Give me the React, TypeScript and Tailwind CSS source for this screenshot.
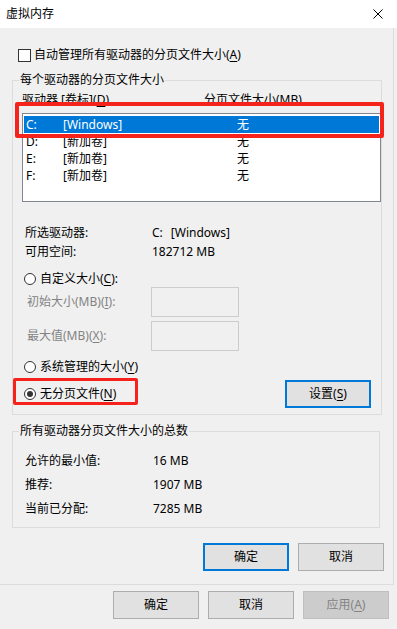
import type { ReactNode } from "react";

type Drive = { letter: string; label: string; size: string; selected?: boolean };

const DRIVES: Drive[] = [
  { letter: "C:", label: "[Windows]", size: "无", selected: true },
  { letter: "D:", label: "[新加卷]", size: "无" },
  { letter: "E:", label: "[新加卷]", size: "无" },
  { letter: "F:", label: "[新加卷]", size: "无" },
];

function U({ children }: { children: ReactNode }) {
  return <u className="underline underline-offset-[2px]">{children}</u>;
}

function Radio({ checked }: { checked?: boolean }) {
  return (
    <span className="flex h-[12px] w-[12px] shrink-0 items-center justify-center rounded-full border border-[#333333] bg-white">
      {checked && <span className="h-[6px] w-[6px] rounded-full bg-[#333333]" />}
    </span>
  );
}

function Btn({ children, kind = "normal" }: { children: ReactNode; kind?: "normal" | "focus" | "disabled" }) {
  const tone =
    kind === "focus"
      ? "border-2 border-[#0078d7] bg-[#e1e1e1] text-black"
      : kind === "disabled"
        ? "border border-[#bfbfbf] bg-[#cccccc] text-[#838383]"
        : "border border-[#adadad] bg-[#e1e1e1] text-black";
  return (
    <button className={`flex h-[28px] w-[86px] shrink-0 items-center justify-center ${tone}`}>
      {children}
    </button>
  );
}

function Input() {
  return <span className="block h-[30px] w-[88px] border border-[#cccccc] bg-[#f0f0f0]" />;
}

export default function App() {
  return (
    <div className="relative h-[629px] w-[397px] overflow-hidden bg-[#f0f0f0] font-['Noto_Sans','Noto_Sans_CJK_SC',sans-serif] text-[12px] leading-[16px] text-black">
      {/* title bar */}
      <div className="flex h-[28px] items-center justify-between bg-white pl-[6px] pr-[14px]">
        <span>虚拟内存</span>
        <svg width="10" height="10" viewBox="0 0 10 10" className="block">
          <path d="M0.5 0.5 L9.5 9.5 M9.5 0.5 L0.5 9.5" stroke="#000" strokeWidth="1" fill="none" />
        </svg>
      </div>

      {/* virtual memory dialog body */}
      <div className="h-[557px] w-[394px] border-b border-r border-[#dcdcdc] pl-[12px] pt-[19px]">
        <div className="flex h-[16px] items-center">
          <span className="ml-[6px] h-[13px] w-[13px] border border-[#333333] bg-white" />
          <span className="ml-[3px]">
            自动管理所有驱动器的分页文件大小(<U>A</U>)
          </span>
        </div>

        <fieldset className="mt-[9px] w-[368px] border border-[#dcdcdc]">
          <legend className="ml-[6px] px-[1px] leading-[16px]">每个驱动器的分页文件大小</legend>

          <div className="pl-[9px] pt-[4px]">
            <div className="flex h-[16px] items-center">
              <span className="w-[182px]">
                驱动器 [卷标](<U>D</U>)
              </span>
              <span>分页文件大小(MB)</span>
            </div>
            <div className="mt-[5px] h-[89px] w-[359px] border border-[#828790] bg-white px-[1px] pt-[2px]">
              {DRIVES.map((d) => (
                <div
                  key={d.letter}
                  className={`flex h-[17px] items-center pl-[2px] ${d.selected ? "bg-[#0078d7] text-white" : ""}`}
                >
                  <span className="w-[37px]">{d.letter}</span>
                  <span className="w-[174px]">{d.label}</span>
                  <span>{d.size}</span>
                </div>
              ))}
            </div>
          </div>

          <div className="mt-[23px] flex h-[16px] items-center pl-[12px]">
            <span className="w-[127px]">所选驱动器:</span>
            <span>
              C:<span className="ml-[8px]">[Windows]</span>
            </span>
          </div>
          <div className="mt-[3px] flex h-[16px] items-center pl-[12px]">
            <span className="w-[127px]">可用空间:</span>
            <span>182712 MB</span>
          </div>

          <div className="mt-[11px] flex h-[16px] items-center pl-[11px]">
            <Radio />
            <span className="ml-[4px]">
              自定义大小(<U>C</U>):
            </span>
          </div>
          <div className="flex h-[30px] items-center pl-[14px] text-[#838383]">
            <span className="w-[124px]">
              初始大小(MB)(<U>I</U>):
            </span>
            <Input />
          </div>
          <div className="mt-[4px] flex h-[30px] items-center pl-[14px] text-[#838383]">
            <span className="w-[124px]">
              最大值(MB)(<U>X</U>):
            </span>
            <Input />
          </div>

          <div className="mt-[8px] flex h-[16px] items-center pl-[11px]">
            <Radio />
            <span className="ml-[4px]">
              系统管理的大小(<U>Y</U>)
            </span>
          </div>
          <div className="mt-[5px] mb-[6px] flex h-[28px] items-center justify-between pl-[11px] pr-[10px]">
            <div className="flex items-center">
              <Radio checked />
              <span className="ml-[4px]">
                无分页文件(<U>N</U>)
              </span>
            </div>
            <Btn kind="focus">
              设置(<U>S</U>)
            </Btn>
          </div>
        </fieldset>

        <fieldset className="mt-[8px] w-[368px] border border-[#dcdcdc] pb-[6px] pt-[10px]">
          <legend className="ml-[6px] px-[1px] leading-[16px]">所有驱动器分页文件大小的总数</legend>
          {[
            ["允许的最小值:", "16 MB"],
            ["推荐:", "1907 MB"],
            ["当前已分配:", "7285 MB"],
          ].map(([k, v]) => (
            <div key={k} className="flex h-[24px] items-center pl-[12px]">
              <span className="w-[128px]">{k}</span>
              <span>{v}</span>
            </div>
          ))}
        </fieldset>

        <div className="mt-[15px] flex justify-end gap-[9px] pr-[9px]">
          <Btn kind="focus">确定</Btn>
          <Btn>取消</Btn>
        </div>
      </div>

      {/* parent dialog buttons */}
      <div className="mt-[6px] flex justify-end gap-[9px] pr-[8px]">
        <Btn>确定</Btn>
        <Btn>取消</Btn>
        <Btn kind="disabled">
          应用(<U>A</U>)
        </Btn>
      </div>

      {/* red annotation boxes */}
      <span className="pointer-events-none absolute left-[15px] top-[102px] h-[36px] w-[369px] rounded-[2px] border-[4px] border-[#f5231c]" />
      <span className="pointer-events-none absolute left-[13px] top-[378px] h-[27px] w-[125px] rounded-[2px] border-[3px] border-[#f5231c]" />
    </div>
  );
}
